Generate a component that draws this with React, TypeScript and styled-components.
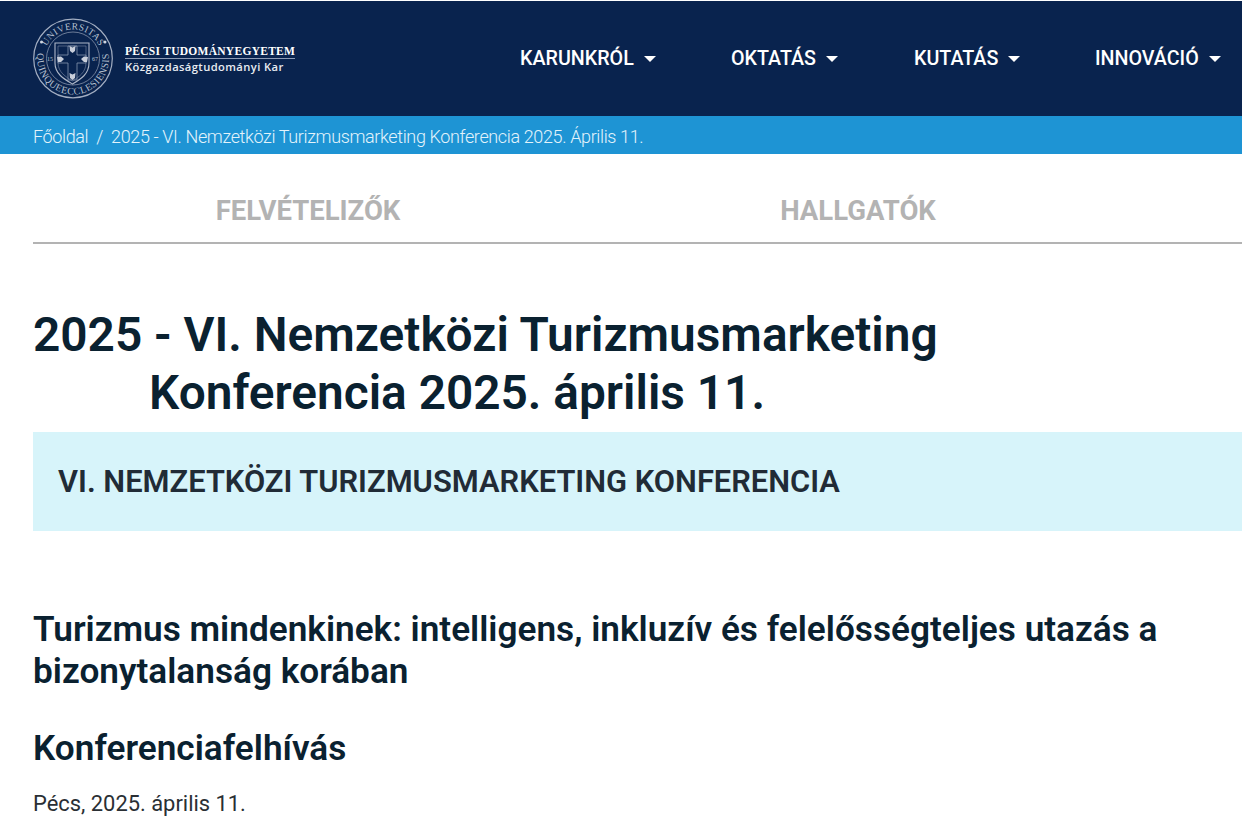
import React from "react";
import styled, { createGlobalStyle } from "styled-components";

const Global = createGlobalStyle`
  html, body { margin: 0; padding: 0; background: #fff; }
  body { font-family: Roboto, "Liberation Sans", sans-serif; overflow: hidden; height: 828px; }
  * { box-sizing: border-box; }
`;
const Page = styled.div`width: 1242px; height: 828px; padding-top: 1px; overflow: hidden;`;
const Header = styled.header`
  height: 115px; background: #09234e; display: flex; justify-content: space-between;
  padding: 0 0 0 32px; overflow: hidden;
`;
const Brand = styled.div`display: flex; align-items: flex-start; padding-top: 16px; width: 264px; gap: 11px;`;
const BrandText = styled.div`
  display: flex; flex-direction: column; margin-top: 27px; color: #fff; width: 170px;
`;
const Uni = styled.div`
  font: 700 11.5px/14px "Liberation Serif", serif; letter-spacing: .28px; white-space: nowrap;
  border-bottom: 1px solid #8e9cb6; height: 15px;
`;
const Faculty = styled.div`font: 600 11.2px/15px "Open Sans", sans-serif; letter-spacing: .4px; white-space: nowrap; color: #e8ecf2;`;
const Nav = styled.nav`display: flex; padding-top: 46px; height: 100%; width: 722px; flex: none;`;
const NavItem = styled.div<{ $w: number }>`
  width: ${p => p.$w}px; color: #fff; font-size: 19.7px; font-weight: 500; line-height: 24px;
  display: flex; align-items: center; gap: 10px; height: 24px; white-space: nowrap;
`;
const Caret = styled.span`
  width: 0; height: 0; border-top: 6px solid #fff; border-left: 6px solid transparent; border-right: 6px solid transparent;
`;
const Crumbs = styled.div`
  height: 38px; background: #1e94d4; color: #e3f3fb; padding-left: 33px; display: flex; align-items: center;
  font-size: 18px; font-weight: 300; letter-spacing: -.37px; white-space: nowrap; gap: 8px; padding-top: 3px;
`;
const Main = styled.main`padding-left: 33px;`;
const Tabs = styled.div`
  display: grid; grid-template-columns: 550px 550px; height: 90px; border-bottom: 2px solid #b3b3b3;
  padding-top: 39px;
`;
const Tab = styled.div`
  text-align: center; color: #b3b3b3; font-size: 27.5px; font-weight: 700; line-height: 36px;
`;
const Title = styled.h1`
  margin: 62px 0 0; color: #0a2130; font-size: 47.8px; font-weight: 600; line-height: 58px; width: 1000px;
`;
const TitleLine = styled.span<{ $indent?: number }>`display: block; padding-left: ${p => p.$indent || 0}px; white-space: nowrap;`;
const Banner = styled.div`
  margin-top: 10px; height: 99px; background: #d7f4fa; padding-left: 25px; display: flex; align-items: center;
  color: #212b36; font-size: 30.85px; font-weight: 600; white-space: nowrap;
`;
const Sub = styled.h2`
  margin: 78px 0 0; color: #0a2130; font-size: 35.2px; font-weight: 600; line-height: 41.5px; width: 1180px;
`;
const Sec = styled.h2`margin: 35px 0 0; color: #0a2130; font-size: 35.2px; font-weight: 600; line-height: 42px;`;
const Para = styled.p`margin: 19px 0 0; color: #2a2f34; font-size: 21.9px; font-weight: 400; line-height: 32px;`;

const Logo = () => (
  <svg width="82" height="82" viewBox="0 0 82 82">
    <defs>
      <path id="arcTop" d="M12 41.5 A29 29 0 0 1 70 41.5" />
      <path id="arcBot" d="M8.4 26.3 A36 36 0 0 0 41 77.5 A36 36 0 0 0 73.6 26.3" />
    </defs>
    <circle cx="41" cy="41.5" r="39.3" fill="none" stroke="#a3aec2" strokeWidth="1.2" />
    <circle cx="41" cy="41.5" r="26.5" fill="none" stroke="#8693ab" strokeWidth=".8" />
    <text fill="#b7c0d0" fontFamily="Liberation Serif, serif" fontSize="9.5" letterSpacing=".4">
      <textPath href="#arcTop" startOffset="50%" textAnchor="middle">UNIVERSITAS</textPath>
    </text>
    <text fill="#b7c0d0" fontFamily="Liberation Serif, serif" fontSize="10" letterSpacing=".5">
      <textPath href="#arcBot" startOffset="50%" textAnchor="middle">QUINQUEECCLESIENSIS</textPath>
    </text>
    <circle cx="9.5" cy="25" r="1.5" fill="#d0d6e1" />
    <circle cx="73" cy="25" r="1.5" fill="#d0d6e1" />
    <path d="M23 26 H57 V46 C57 57 49 62 40.5 67 C32 62 23 57 23 46 Z" fill="none" stroke="#aeb7c8" strokeWidth="1.1" />
    <path d="M26 29 H54 V46 C54 55 47 60 40.5 64 C34 60 26 55 26 46 Z" fill="none" stroke="#6f7d9a" strokeWidth=".7" />
    <path d="M36 29 H45 V38 H54 V46 H45 V63 H36 V46 H26 V38 H36 Z" fill="none" stroke="#8794ae" strokeWidth=".8" />
    <path d="M37.5 29 L40.5 30.5 L43.5 29 L43 34 L40.5 36 L38 34 Z M25 40 L29 39.5 L32 42 L29 45 L26 45 Z M56 40 L52 39.5 L49 42 L52 45 L55 45 Z M37.5 56 L40.5 57.5 L43.5 56 L43 61 L40.5 63 L38 61 Z" fill="#c9cfdb" />
    <text x="15" y="44" fill="#b7c0d0" fontFamily="Liberation Serif, serif" fontSize="6">15</text>
    <text x="60" y="44" fill="#b7c0d0" fontFamily="Liberation Serif, serif" fontSize="6">67</text>
  </svg>
);

export default function App() {
  return (
    <Page>
      <Global />
      <Header>
        <Brand>
          <Logo />
          <BrandText>
            <Uni>PÉCSI TUDOMÁNYEGYETEM</Uni>
            <Faculty>Közgazdaságtudományi Kar</Faculty>
          </BrandText>
        </Brand>
        <Nav>
          <NavItem $w={211}>KARUNKRÓL <Caret /></NavItem>
          <NavItem $w={183}>OKTATÁS <Caret /></NavItem>
          <NavItem $w={181}>KUTATÁS <Caret /></NavItem>
          <NavItem $w={147}>INNOVÁCIÓ <Caret /></NavItem>
        </Nav>
      </Header>
      <Crumbs>
        <span>Főoldal</span><span>/</span><span>2025 - VI. Nemzetközi Turizmusmarketing Konferencia 2025. Április 11.</span>
      </Crumbs>
      <Main>
        <Tabs><Tab>FELVÉTELIZŐK</Tab><Tab>HALLGATÓK</Tab></Tabs>
        <Title>
          <TitleLine>2025 - VI. Nemzetközi Turizmusmarketing</TitleLine>
          <TitleLine $indent={116}>Konferencia 2025. április 11.</TitleLine>
        </Title>
        <Banner>VI. NEMZETKÖZI TURIZMUSMARKETING KONFERENCIA</Banner>
        <Sub>Turizmus mindenkinek: intelligens, inkluzív és felelősségteljes utazás a bizonytalanság korában</Sub>
        <Sec>Konferenciafelhívás</Sec>
        <Para>Pécs, 2025. április 11.</Para>
      </Main>
    </Page>
  );
}
